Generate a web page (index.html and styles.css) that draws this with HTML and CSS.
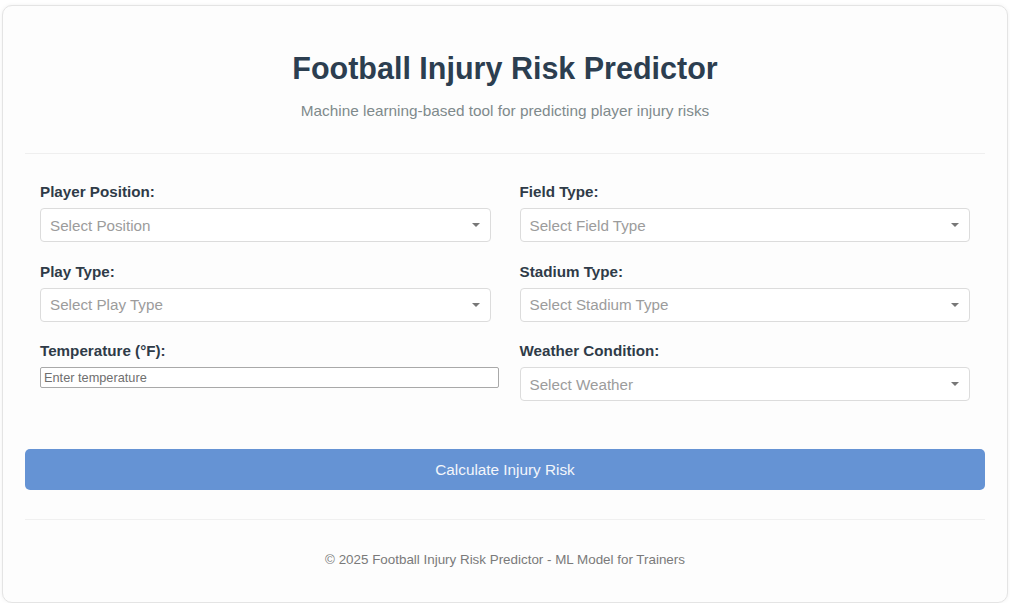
FILE: index.html
```html
<!DOCTYPE html>
<html lang="en">
<head>
<meta charset="utf-8">
<title>Football Injury Risk Predictor</title>
<link rel="stylesheet" href="styles.css">
</head>
<body>
<div class="card">
  <header class="header">
    <h1 class="title">Football Injury Risk Predictor</h1>
    <p class="subtitle">Machine learning-based tool for predicting player injury risks</p>
  </header>
  <form class="form">
    <div class="grid">
      <div class="group">
        <label class="label">Player Position:</label>
        <div class="select-wrap">
          <select class="select"><option>Select Position</option></select>
          <svg class="arrow" width="8" height="4" viewBox="0 0 8 4"><path d="M0 0H8L4 4Z" fill="#777"/></svg>
        </div>
      </div>
      <div class="group">
        <label class="label">Field Type:</label>
        <div class="select-wrap">
          <select class="select"><option>Select Field Type</option></select>
          <svg class="arrow" width="8" height="4" viewBox="0 0 8 4"><path d="M0 0H8L4 4Z" fill="#777"/></svg>
        </div>
      </div>
      <div class="group">
        <label class="label">Play Type:</label>
        <div class="select-wrap">
          <select class="select"><option>Select Play Type</option></select>
          <svg class="arrow" width="8" height="4" viewBox="0 0 8 4"><path d="M0 0H8L4 4Z" fill="#777"/></svg>
        </div>
      </div>
      <div class="group">
        <label class="label">Stadium Type:</label>
        <div class="select-wrap">
          <select class="select"><option>Select Stadium Type</option></select>
          <svg class="arrow" width="8" height="4" viewBox="0 0 8 4"><path d="M0 0H8L4 4Z" fill="#777"/></svg>
        </div>
      </div>
      <div class="group">
        <label class="label">Temperature (°F):</label>
        <input class="input" type="text" placeholder="Enter temperature">
      </div>
      <div class="group">
        <label class="label">Weather Condition:</label>
        <div class="select-wrap">
          <select class="select"><option>Select Weather</option></select>
          <svg class="arrow" width="8" height="4" viewBox="0 0 8 4"><path d="M0 0H8L4 4Z" fill="#777"/></svg>
        </div>
      </div>
    </div>
    <button class="button" type="button">Calculate Injury Risk</button>
  </form>
  <footer class="footer">© 2025 Football Injury Risk Predictor - ML Model for Trainers</footer>
</div>
</body>
</html>
```

FILE: styles.css
```css
* { box-sizing: border-box; }
html, body { margin: 0; padding: 0; }
body {
  background: #ffffff;
  font-family: "Liberation Sans", Arial, sans-serif;
  padding: 5px 0 0 2px;
}
.card {
  width: 1006px;
  height: 598px;
  background: #fdfdfd;
  border: 1px solid #e4e4e4;
  border-radius: 10px;
  box-shadow: 0 0 4px rgba(0,0,0,0.06);
  padding: 0 22px;
}
.header {
  padding: 44px 0 33.5px;
  border-bottom: 1px solid #efefef;
  text-align: center;
}
.title {
  margin: 0;
  font-size: 30.5px;
  line-height: 36px;
  font-weight: bold;
  color: #2c3e50;
}
.subtitle {
  margin: 15.5px 0 0;
  font-size: 15.35px;
  line-height: 18px;
  color: #7f8a8c;
}
.form {
  padding-top: 29px;
}
.grid {
  display: grid;
  grid-template-columns: 1fr 1fr;
  column-gap: 29px;
  row-gap: 20.5px;
  padding: 0 15px;
}
.group {
  display: flex;
  flex-direction: column;
}
.label {
  font-size: 15.2px;
  line-height: 18px;
  font-weight: bold;
  color: #2f3b48;
  margin-bottom: 7px;
}
.select-wrap {
  position: relative;
}
.select {
  -webkit-appearance: none;
  appearance: none;
  width: 100%;
  height: 34px;
  border: 1px solid #dcdcdc;
  border-radius: 4px;
  background: #ffffff;
  padding: 0 9px;
  font-family: "Liberation Sans", Arial, sans-serif;
  font-size: 15.2px;
  color: #9c9c9c;
  outline: none;
}
.arrow {
  position: absolute;
  right: 11px;
  top: 15px;
}
.input {
  width: calc(100% + 8px);
  height: 21px;
  border: 1px solid #a9a9a9;
  border-radius: 2px;
  padding: 1px 3px;
  background: #ffffff;
  font-family: "Liberation Sans", Arial, sans-serif;
  font-size: 12.76px;
  color: #222;
}
.input::placeholder {
  color: #6f6f6f;
}
.button {
  display: block;
  width: 100%;
  height: 41px;
  margin-top: 48.3px;
  border: none;
  border-radius: 5px;
  background: #6593d4;
  color: #f3f6fb;
  font-family: "Liberation Sans", Arial, sans-serif;
  font-size: 15.3px;
}
.footer {
  margin-top: 28.7px;
  border-top: 1px solid #f0f0f0;
  padding-top: 32px;
  text-align: center;
  font-size: 13.4px;
  line-height: 16px;
  color: #7a7a7a;
}
```
